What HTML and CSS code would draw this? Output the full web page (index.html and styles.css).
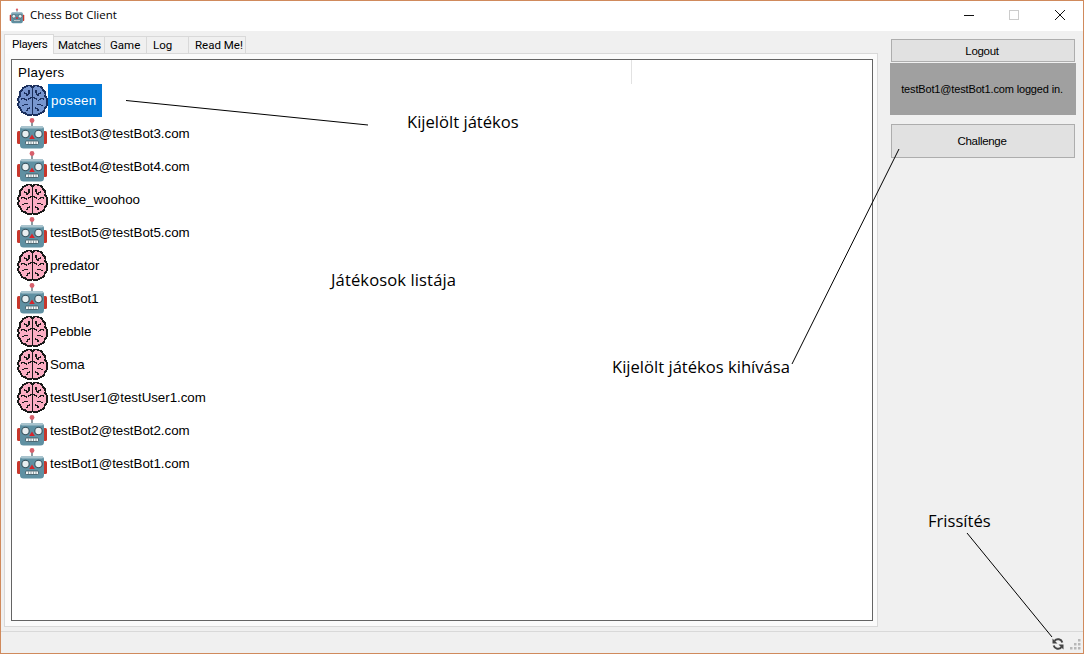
FILE: index.html
```html
<!DOCTYPE html>
<html lang="hu">
<head>
<meta charset="utf-8">
<title>Chess Bot Client</title>
<link rel="stylesheet" href="styles.css">
</head>
<body>
<svg class="defs" width="0" height="0">
  <defs>
    <symbol id="robot" viewBox="0 0 32 33">
      <rect x="1" y="14" width="4" height="13" rx="1.500" fill="#c8372c"/>
      <rect x="27" y="14" width="4" height="13" rx="1.500" fill="#c8372c"/>
      <rect x="15" y="4" width="2" height="6" fill="#8d9aa1"/>
      <circle cx="16" cy="3.500" r="2.400" fill="#d8606c"/>
      <rect x="4" y="9" width="24" height="22.500" rx="3.500" fill="#5f90a2"/>
      <rect x="5" y="9" width="22" height="2.500" rx="1.200" fill="#a9c4ce"/>
      <circle cx="9.500" cy="17" r="3.700" fill="#e8eef0" stroke="#35505c" stroke-width="1.100"/>
      <circle cx="22.500" cy="17" r="3.700" fill="#e8eef0" stroke="#35505c" stroke-width="1.100"/>
      <path d="M16 17.500l2.800 4.500h-5.600z" fill="#d8232a"/>
      <rect x="9.500" y="24" width="13" height="3.500" rx="1" fill="#f2f5f6" stroke="#35505c" stroke-width=".8"/>
      <path d="M12.500 24.500v2.500M15 24.500v2.500M17.500 24.500v2.500M20 24.500v2.500" stroke="#35505c" stroke-width=".5"/>
    </symbol>
    <symbol id="brain" viewBox="1 0 29 33" preserveAspectRatio="none">
      <g shape-rendering="crispEdges">
      <path d="M16 3.500C14.500 1 12 1 10.500 2.500 8 2.500 7 4 6.500 6.500 4.500 7.500 4 10 4.500 12 3 13.500 2.500 16 3.500 18 2.500 20 3 23 5 24.500 5 27 7 29 9 29 10.500 31.500 14 32 16 30 18 32 21.500 31.500 23 29 25 29 27 27 27 24.500 29 23 29.500 20 28.500 18 29.500 16 29 13.500 27.500 12 28 10 27.500 7.500 25.500 6.500 25 4 24 2.500 21.500 2.500 20 1 17.500 1 16 3.500Z" fill="var(--lobe)" stroke="var(--ink)" stroke-width="1.700"/>
      <path d="M16 4v26M8 9c2 0 3 1 3.500 3M5.500 15c3-1 4.500 0 5.500 2M12.500 6c1 2 0 4-1 5M7 22c2-2 3.500-2 5-1M11 27c0-2 1.500-3 3-3M24 9c-2 0-3 1-3.500 3M26.500 15c-3-1-4.500 0-5.500 2M19.500 6c-1 2 0 4 1 5M25 22c-2-2-3.500-2-5-1M21 27c0-2-1.500-3-3-3M12 15c1.500 0 2.500-1 3-2M20 15c-1.500 0-2.500-1-3-2" fill="none" stroke="var(--ink)" stroke-width="1.300"/>
      </g>
    </symbol>
  </defs>
</svg>
<div class="window">
  <header class="titlebar">
    <svg class="app-icon"><use href="#robot"/></svg>
    <span class="title">Chess Bot Client</span>
    <div class="controls">
      <svg class="ctl" viewBox="0 0 46 30"><path d="M19 14.500h10" stroke="#111" fill="none"/></svg>
      <svg class="ctl" viewBox="0 0 46 30"><rect x="18.500" y="9.500" width="9" height="9" stroke="#ccc" fill="none"/></svg>
      <svg class="ctl" viewBox="0 0 46 30"><path d="M18 9l10 10M28 9l-10 10" stroke="#111" fill="none"/></svg>
    </div>
  </header>
  <div class="client">
    <main class="left">
      <nav class="tabs">
        <span class="tab active">Players</span>
        <span class="tab t-matches">Matches</span>
        <span class="tab t-game">Game</span>
        <span class="tab t-log">Log</span>
        <span class="tab t-read">Read Me!</span>
      </nav>
      <section class="page">
        <div class="list">
          <div class="list-head">Players<i class="col-sep"></i></div>
          <div class="row"><svg class="ico sel"><use href="#brain"/></svg><span class="name selected">poseen</span></div>
          <div class="row"><svg class="ico"><use href="#robot"/></svg><span class="name">testBot3@testBot3.com</span></div>
          <div class="row"><svg class="ico"><use href="#robot"/></svg><span class="name">testBot4@testBot4.com</span></div>
          <div class="row"><svg class="ico"><use href="#brain"/></svg><span class="name">Kittike_woohoo</span></div>
          <div class="row"><svg class="ico"><use href="#robot"/></svg><span class="name">testBot5@testBot5.com</span></div>
          <div class="row"><svg class="ico"><use href="#brain"/></svg><span class="name">predator</span></div>
          <div class="row"><svg class="ico"><use href="#robot"/></svg><span class="name">testBot1</span></div>
          <div class="row"><svg class="ico"><use href="#brain"/></svg><span class="name">Pebble</span></div>
          <div class="row"><svg class="ico"><use href="#brain"/></svg><span class="name">Soma</span></div>
          <div class="row"><svg class="ico"><use href="#brain"/></svg><span class="name">testUser1@testUser1.com</span></div>
          <div class="row"><svg class="ico"><use href="#robot"/></svg><span class="name">testBot2@testBot2.com</span></div>
          <div class="row"><svg class="ico"><use href="#robot"/></svg><span class="name">testBot1@testBot1.com</span></div>
        </div>
      </section>
    </main>
    <aside class="side">
      <button class="btn logout">Logout</button>
      <div class="status">testBot1@testBot1.com logged in.</div>
      <button class="btn challenge">Challenge</button>
    </aside>
  </div>
  <footer class="statusbar">
    <svg class="refresh" viewBox="0 0 12 12"><path d="M10.300 4.500A4.500 4.500 0 0 0 2.500 2.800M1.700 7.500a4.500 4.500 0 0 0 7.800 1.700" fill="none" stroke="#444" stroke-width="2"/><path d="M.5 .5v5h5zM11.500 11.500v-5h-5z" fill="#444"/></svg>
    <svg class="grip" viewBox="0 0 11 11"><path d="M8 0h2.500v2.500H8zM8 4h2.500v2.500H8zM8 8h2.500v2.500H8zM4 4h2.500v2.500H4zM4 8h2.500v2.500H4zM0 8h2.500v2.500H0z" fill="#b8b8b8"/></svg>
  </footer>
</div>
<svg class="marks" viewBox="0 0 1084 654">
  <path d="M126 100.500L368 125M899 149L792 364M967 533L1052 637" fill="none" stroke="#000"/>
</svg>
<span class="note n1">Kijelölt játékos</span>
<span class="note n2">Játékosok listája</span>
<span class="note n3">Kijelölt játékos kihívása</span>
<span class="note n4">Frissítés</span>
</body>
</html>
```
FILE: styles.css
```css
* { box-sizing: border-box; }
html, body { margin: 0; padding: 0; }
body { width: 1084px; height: 654px; position: relative; overflow: hidden; font-family: "Liberation Sans", Arial, sans-serif; }
.defs { position: absolute; }
.window { width: 1084px; height: 654px; display: flex; flex-direction: column; border: 1px solid #d08a5c; background: #f0f0f0; }
.titlebar { height: 30px; background: #fff; display: flex; align-items: center; padding-left: 8px; flex: none; }
.app-icon { width: 16px; height: 16px; margin-right: 5px; }
.title { font: 11.500px/14px "Open Sans", sans-serif; color: #000; flex: 1; margin-top: -2px; }
.controls { display: flex; }
.ctl { width: 46px; height: 30px; display: block; }
.client { flex: 1; display: flex; min-height: 0; }
.left { width: 878px; padding: 3px 0 0 3px; display: flex; flex-direction: column; flex: none; }
.tabs { display: flex; height: 19px; align-items: flex-end; font: 11.500px Roboto, sans-serif; }
.tab { height: 17px; line-height: 17px; border: 1px solid #d9d9d9; border-left: 0; border-bottom: 0; background: #f0f0f0; color: #000; }
.tab.active { width: 50px; height: 20px; line-height: 19px; border-left: 1px solid #d9d9d9; background: #fcfcfc; position: relative; top: 1px; padding-left: 7px; letter-spacing: -.3px; }
.t-matches { width: 51px; padding-left: 4px; letter-spacing: -.2px; }
.t-game { width: 42px; padding-left: 5px; }
.t-log { width: 42px; padding-left: 6px; }
.t-read { width: 57px; padding-left: 6px; }
.page { width: 874px; height: 574px; padding: 5px 4px 5px 6px; background: #fbfbfb; border: 1px solid #d9d9d9; }
.list { height: 562px; background: #fff; border: 1px solid #646464; padding: 0 0 0 4px; }
.list-head { height: 24px; font-size: 13.330px; line-height: 25px; padding-left: 2px; color: #000; position: relative; letter-spacing: .3px; }
.col-sep { position: absolute; left: 615px; top: 0; width: 1px; height: 24px; background: #e2e2e2; }
.row { height: 33px; display: flex; align-items: center; font-size: 13.330px; color: #000; }
.ico { width: 32px; height: 33px; flex: none; --lobe: #fcaec4; --ink: #1a1a1a; }
.ico.sel { --lobe: #7896cf; --ink: #1b2f5c; }
.name { height: 33px; line-height: 33px; padding: 0 5px 0 2px; letter-spacing: -.03px; }
.selected { background: #0078d7; color: #fff; padding: 0 5px 0 3px; min-width: 54px; letter-spacing: .3px; }
.side { flex: 1; padding: 8px 8px 0 12px; display: flex; flex-direction: column; align-items: flex-start; }
.btn { font: 11.500px "Liberation Sans", sans-serif; letter-spacing: -.3px; background: #e1e1e1; border: 1px solid #adadad; color: #000; padding: 0 2px 0 0; width: 184px; flex: none; }
.logout { height: 23px; }
.status { height: 52px; width: 186px; margin-left: -1px; margin-top: 1px; padding-right: 2px; background: #a0a0a0; font-size: 11px; letter-spacing: -.15px; display: flex; align-items: center; justify-content: center; color: #000; }
.challenge { height: 34px; margin-top: 9px; }
.statusbar { height: 22px; flex: none; border-top: 1px solid #d9d9d9; display: flex; justify-content: flex-end; align-items: center; padding-right: 2px; }
.refresh { width: 12px; height: 12px; margin-right: 6px; margin-top: 3px; }
.grip { width: 11px; height: 11px; margin-top: 4px; }
.marks { position: absolute; left: 0; top: 0; width: 1084px; height: 654px; pointer-events: none; }
.note { position: absolute; font: 16.600px "Open Sans", sans-serif; color: #000; white-space: nowrap; }
.n1 { left: 407px; top: 110px; }
.n2 { left: 331px; top: 268px; letter-spacing: .1px; }
.n3 { left: 612px; top: 355px; }
.n4 { left: 928px; top: 509px; }
```
